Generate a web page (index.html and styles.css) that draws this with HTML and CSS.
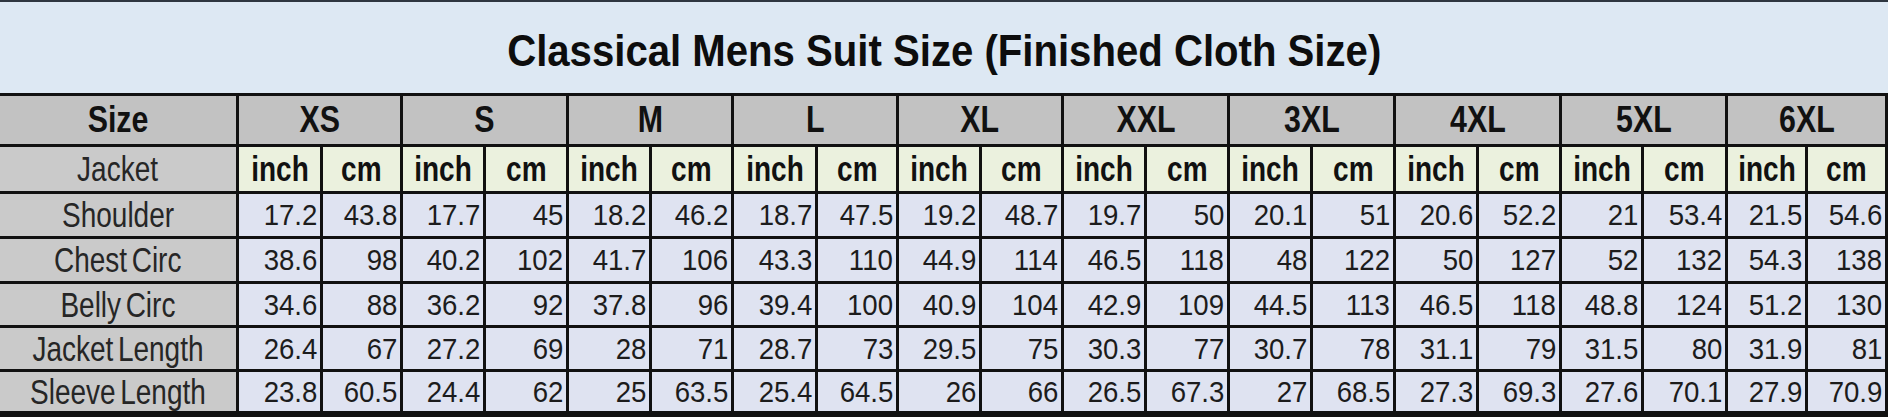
FILE: index.html
```html
<!DOCTYPE html>
<html>
<head>
<meta charset="utf-8">
<title>Classical Mens Suit Size</title>
<link rel="stylesheet" href="styles.css">
</head>
<body>
<div class="sheet">
  <div class="title"><span>Classical Mens Suit Size (Finished Cloth Size)</span></div>
  <div class="grid">
    <div class="hd lbl-hd"><span>Size</span></div>
    <div class="hd grp"><span>XS</span></div>
    <div class="hd grp"><span>S</span></div>
    <div class="hd grp"><span>M</span></div>
    <div class="hd grp"><span>L</span></div>
    <div class="hd grp"><span>XL</span></div>
    <div class="hd grp"><span>XXL</span></div>
    <div class="hd grp"><span>3XL</span></div>
    <div class="hd grp"><span>4XL</span></div>
    <div class="hd grp"><span>5XL</span></div>
    <div class="hd grp"><span>6XL</span></div>

    <div class="lbl"><span>Jacket</span></div>
    <div class="unit"><span>inch</span></div><div class="unit"><span>cm</span></div>
    <div class="unit"><span>inch</span></div><div class="unit"><span>cm</span></div>
    <div class="unit"><span>inch</span></div><div class="unit"><span>cm</span></div>
    <div class="unit"><span>inch</span></div><div class="unit"><span>cm</span></div>
    <div class="unit"><span>inch</span></div><div class="unit"><span>cm</span></div>
    <div class="unit"><span>inch</span></div><div class="unit"><span>cm</span></div>
    <div class="unit"><span>inch</span></div><div class="unit"><span>cm</span></div>
    <div class="unit"><span>inch</span></div><div class="unit"><span>cm</span></div>
    <div class="unit"><span>inch</span></div><div class="unit"><span>cm</span></div>
    <div class="unit"><span>inch</span></div><div class="unit"><span>cm</span></div>

    <div class="lbl"><span>Shoulder</span></div>
    <div class="num"><span>17.2</span></div><div class="num"><span>43.8</span></div>
    <div class="num"><span>17.7</span></div><div class="num"><span>45</span></div>
    <div class="num"><span>18.2</span></div><div class="num"><span>46.2</span></div>
    <div class="num"><span>18.7</span></div><div class="num"><span>47.5</span></div>
    <div class="num"><span>19.2</span></div><div class="num"><span>48.7</span></div>
    <div class="num"><span>19.7</span></div><div class="num"><span>50</span></div>
    <div class="num"><span>20.1</span></div><div class="num"><span>51</span></div>
    <div class="num"><span>20.6</span></div><div class="num"><span>52.2</span></div>
    <div class="num"><span>21</span></div><div class="num"><span>53.4</span></div>
    <div class="num"><span>21.5</span></div><div class="num"><span>54.6</span></div>

    <div class="lbl"><span>Chest Circ</span></div>
    <div class="num"><span>38.6</span></div><div class="num"><span>98</span></div>
    <div class="num"><span>40.2</span></div><div class="num"><span>102</span></div>
    <div class="num"><span>41.7</span></div><div class="num"><span>106</span></div>
    <div class="num"><span>43.3</span></div><div class="num"><span>110</span></div>
    <div class="num"><span>44.9</span></div><div class="num"><span>114</span></div>
    <div class="num"><span>46.5</span></div><div class="num"><span>118</span></div>
    <div class="num"><span>48</span></div><div class="num"><span>122</span></div>
    <div class="num"><span>50</span></div><div class="num"><span>127</span></div>
    <div class="num"><span>52</span></div><div class="num"><span>132</span></div>
    <div class="num"><span>54.3</span></div><div class="num"><span>138</span></div>

    <div class="lbl"><span>Belly Circ</span></div>
    <div class="num"><span>34.6</span></div><div class="num"><span>88</span></div>
    <div class="num"><span>36.2</span></div><div class="num"><span>92</span></div>
    <div class="num"><span>37.8</span></div><div class="num"><span>96</span></div>
    <div class="num"><span>39.4</span></div><div class="num"><span>100</span></div>
    <div class="num"><span>40.9</span></div><div class="num"><span>104</span></div>
    <div class="num"><span>42.9</span></div><div class="num"><span>109</span></div>
    <div class="num"><span>44.5</span></div><div class="num"><span>113</span></div>
    <div class="num"><span>46.5</span></div><div class="num"><span>118</span></div>
    <div class="num"><span>48.8</span></div><div class="num"><span>124</span></div>
    <div class="num"><span>51.2</span></div><div class="num"><span>130</span></div>

    <div class="lbl"><span>Jacket Length</span></div>
    <div class="num"><span>26.4</span></div><div class="num"><span>67</span></div>
    <div class="num"><span>27.2</span></div><div class="num"><span>69</span></div>
    <div class="num"><span>28</span></div><div class="num"><span>71</span></div>
    <div class="num"><span>28.7</span></div><div class="num"><span>73</span></div>
    <div class="num"><span>29.5</span></div><div class="num"><span>75</span></div>
    <div class="num"><span>30.3</span></div><div class="num"><span>77</span></div>
    <div class="num"><span>30.7</span></div><div class="num"><span>78</span></div>
    <div class="num"><span>31.1</span></div><div class="num"><span>79</span></div>
    <div class="num"><span>31.5</span></div><div class="num"><span>80</span></div>
    <div class="num"><span>31.9</span></div><div class="num"><span>81</span></div>

    <div class="lbl"><span>Sleeve Length</span></div>
    <div class="num"><span>23.8</span></div><div class="num"><span>60.5</span></div>
    <div class="num"><span>24.4</span></div><div class="num"><span>62</span></div>
    <div class="num"><span>25</span></div><div class="num"><span>63.5</span></div>
    <div class="num"><span>25.4</span></div><div class="num"><span>64.5</span></div>
    <div class="num"><span>26</span></div><div class="num"><span>66</span></div>
    <div class="num"><span>26.5</span></div><div class="num"><span>67.3</span></div>
    <div class="num"><span>27</span></div><div class="num"><span>68.5</span></div>
    <div class="num"><span>27.3</span></div><div class="num"><span>69.3</span></div>
    <div class="num"><span>27.6</span></div><div class="num"><span>70.1</span></div>
    <div class="num"><span>27.9</span></div><div class="num"><span>70.9</span></div>
  </div>
</div>
</body>
</html>
```
FILE: styles.css
```css
html, body {
  margin: 0;
  padding: 0;
  background: #ffffff;
}
body {
  font-family: "Liberation Sans", Arial, sans-serif;
  color: #151515;
  overflow: hidden;
}
.sheet {
  width: 1888px;
}
.title {
  box-sizing: border-box;
  height: 93px;
  border-top: 2px solid #2e3640;
  background: #dde8f3;
  display: flex;
  align-items: center;
  justify-content: center;
  padding-top: 6px;
}
.title span {
  display: inline-block;
  font-size: 44px;
  font-weight: bold;
  color: #0d0d0d;
  transform: scaleX(0.912);
  white-space: nowrap;
}
.grid {
  display: grid;
  grid-template-columns: 236px 81px 77px 80px 80px 80px 79px 81px 78px 80px 79px 80px 80px 80px 80px 80px 80px 79px 81px 77px 77px;
  grid-template-rows: 48px 44px 42px 42px 41px 41px 39px;
  gap: 3px;
  padding: 3px 3px 6px 0;
  background: #111111;
}
.hd {
  background: #c2c2c2;
  display: flex;
  align-items: center;
  justify-content: center;
}
.grp {
  grid-column: span 2;
}
.hd span {
  display: inline-block;
  font-size: 37px;
  font-weight: bold;
  color: #111;
  transform: scaleX(0.82);
  white-space: nowrap;
}
.lbl {
  background: #cacaca;
  display: flex;
  align-items: center;
  justify-content: center;
}
.lbl span {
  display: inline-block;
  font-size: 35px;
  color: #262626;
  transform: scaleX(0.8);
  word-spacing: -4px;
  white-space: nowrap;
}
.unit {
  background: #ebf1de;
  display: flex;
  align-items: center;
  justify-content: center;
}
.unit span {
  display: inline-block;
  font-size: 35px;
  font-weight: bold;
  color: #111;
  transform: scaleX(0.8);
  white-space: nowrap;
}
.num {
  background: #dfe3f1;
  display: flex;
  align-items: center;
  justify-content: flex-end;
  padding-right: 3px;
}
.num span {
  display: inline-block;
  font-size: 30px;
  color: #1c1c1c;
  transform: scaleX(0.92);
  transform-origin: right center;
  white-space: nowrap;
}
```
